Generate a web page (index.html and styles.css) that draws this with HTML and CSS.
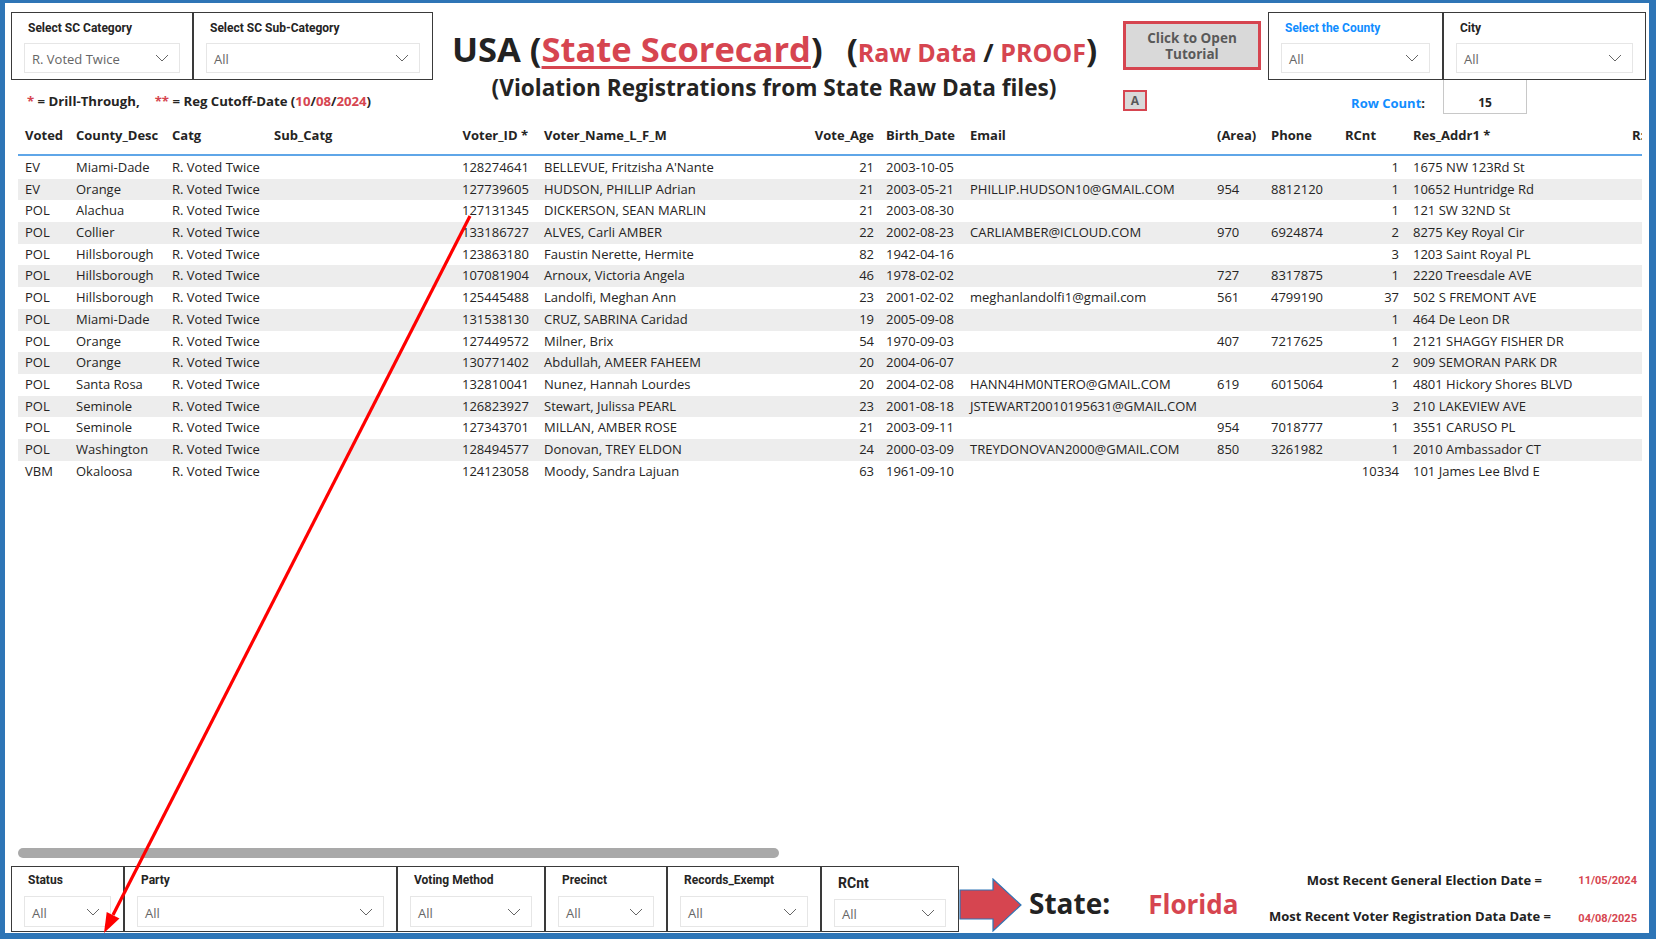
FILE: index.html
```html
<!DOCTYPE html>
<html>
<head>
<meta charset="utf-8">
<link rel="stylesheet" href="styles.css">
</head>
<body>
<div class="frame">
  <div class="top">
    <div class="left-col">
      <div class="slicer-pair">
        <div class="slicer w182">
          <div class="sl-head">Select SC Category</div>
          <div class="dd"><span>R. Voted Twice</span><svg class="chev" width="14" height="8" viewBox="0 0 14 8"><polyline points="1,1 7,7 13,1" fill="none" stroke="#666" stroke-width="1"/></svg></div>
        </div>
        <div class="slicer w240">
          <div class="sl-head">Select SC Sub-Category</div>
          <div class="dd"><span>All</span><svg class="chev" width="14" height="8" viewBox="0 0 14 8"><polyline points="1,1 7,7 13,1" fill="none" stroke="#666" stroke-width="1"/></svg></div>
        </div>
      </div>
      <div class="legend"><span class="red">*</span> = Drill-Through,<span class="gap"></span><span class="red">**</span> = Reg Cutoff-Date (<span class="red">10</span>/<span class="red">08</span>/<span class="red">2024</span>)</div>
    </div>
    <div class="center-col">
      <div class="title"><span class="t-big">USA (<u class="red">State Scorecard</u>)</span><span class="t-mid">(<span class="red t-small">Raw Data</span><span class="t-small"> / </span><span class="red t-small">PROOF</span>)</span></div>
      <div class="subtitle">(Violation Registrations from State Raw Data files)</div>
    </div>
    <div class="btn-col">
      <div class="tut-btn">Click to Open<br>Tutorial</div>
      <div class="a-btn">A</div>
    </div>
    <div class="right-col">
      <div class="slicer-pair">
        <div class="slicer w175">
          <div class="sl-head sl-blue">Select the County</div>
          <div class="dd"><span>All</span><svg class="chev" width="14" height="8" viewBox="0 0 14 8"><polyline points="1,1 7,7 13,1" fill="none" stroke="#666" stroke-width="1"/></svg></div>
        </div>
        <div class="slicer w203">
          <div class="sl-head">City</div>
          <div class="dd"><span>All</span><svg class="chev" width="14" height="8" viewBox="0 0 14 8"><polyline points="1,1 7,7 13,1" fill="none" stroke="#666" stroke-width="1"/></svg></div>
        </div>
      </div>
      <div class="rowcount">
        <div class="rc-label"><span class="blue">Row Count</span>:</div>
        <div class="rc-box">15</div>
      </div>
    </div>
  </div>

  <div class="table">
    <div class="row head">
      <div>Voted</div><div>County_Desc</div><div>Catg</div><div>Sub_Catg</div><div class="r id">Voter_ID *</div><div>Voter_Name_L_F_M</div><div class="r age">Vote_Age</div><div class="bd">Birth_Date</div><div>Email</div><div>(Area)</div><div>Phone</div><div>RCnt</div><div>Res_Addr1 *</div><div>R:</div>
    </div>
    <div class="body">
      <div class="row"><div>EV</div><div>Miami-Dade</div><div>R. Voted Twice</div><div></div><div class="r id">128274641</div><div>BELLEVUE, Fritzisha A'Nante</div><div class="r age">21</div><div class="bd">2003-10-05</div><div></div><div></div><div></div><div class="r rc">1</div><div>1675 NW 123Rd St</div><div></div></div>
      <div class="row alt"><div>EV</div><div>Orange</div><div>R. Voted Twice</div><div></div><div class="r id">127739605</div><div>HUDSON, PHILLIP Adrian</div><div class="r age">21</div><div class="bd">2003-05-21</div><div>PHILLIP.HUDSON10@GMAIL.COM</div><div>954</div><div>8812120</div><div class="r rc">1</div><div>10652 Huntridge Rd</div><div></div></div>
      <div class="row"><div>POL</div><div>Alachua</div><div>R. Voted Twice</div><div></div><div class="r id">127131345</div><div>DICKERSON, SEAN MARLIN</div><div class="r age">21</div><div class="bd">2003-08-30</div><div></div><div></div><div></div><div class="r rc">1</div><div>121 SW 32ND St</div><div></div></div>
      <div class="row alt"><div>POL</div><div>Collier</div><div>R. Voted Twice</div><div></div><div class="r id">133186727</div><div>ALVES, Carli AMBER</div><div class="r age">22</div><div class="bd">2002-08-23</div><div>CARLIAMBER@ICLOUD.COM</div><div>970</div><div>6924874</div><div class="r rc">2</div><div>8275 Key Royal Cir</div><div></div></div>
      <div class="row"><div>POL</div><div>Hillsborough</div><div>R. Voted Twice</div><div></div><div class="r id">123863180</div><div>Faustin Nerette, Hermite</div><div class="r age">82</div><div class="bd">1942-04-16</div><div></div><div></div><div></div><div class="r rc">3</div><div>1203 Saint Royal PL</div><div></div></div>
      <div class="row alt"><div>POL</div><div>Hillsborough</div><div>R. Voted Twice</div><div></div><div class="r id">107081904</div><div>Arnoux, Victoria Angela</div><div class="r age">46</div><div class="bd">1978-02-02</div><div></div><div>727</div><div>8317875</div><div class="r rc">1</div><div>2220 Treesdale AVE</div><div></div></div>
      <div class="row"><div>POL</div><div>Hillsborough</div><div>R. Voted Twice</div><div></div><div class="r id">125445488</div><div>Landolfi, Meghan Ann</div><div class="r age">23</div><div class="bd">2001-02-02</div><div>meghanlandolfi1@gmail.com</div><div>561</div><div>4799190</div><div class="r rc">37</div><div>502 S FREMONT AVE</div><div></div></div>
      <div class="row alt"><div>POL</div><div>Miami-Dade</div><div>R. Voted Twice</div><div></div><div class="r id">131538130</div><div>CRUZ, SABRINA Caridad</div><div class="r age">19</div><div class="bd">2005-09-08</div><div></div><div></div><div></div><div class="r rc">1</div><div>464 De Leon DR</div><div></div></div>
      <div class="row"><div>POL</div><div>Orange</div><div>R. Voted Twice</div><div></div><div class="r id">127449572</div><div>Milner, Brix</div><div class="r age">54</div><div class="bd">1970-09-03</div><div></div><div>407</div><div>7217625</div><div class="r rc">1</div><div>2121 SHAGGY FISHER DR</div><div></div></div>
      <div class="row alt"><div>POL</div><div>Orange</div><div>R. Voted Twice</div><div></div><div class="r id">130771402</div><div>Abdullah, AMEER FAHEEM</div><div class="r age">20</div><div class="bd">2004-06-07</div><div></div><div></div><div></div><div class="r rc">2</div><div>909 SEMORAN PARK DR</div><div></div></div>
      <div class="row"><div>POL</div><div>Santa Rosa</div><div>R. Voted Twice</div><div></div><div class="r id">132810041</div><div>Nunez, Hannah Lourdes</div><div class="r age">20</div><div class="bd">2004-02-08</div><div>HANN4HM0NTERO@GMAIL.COM</div><div>619</div><div>6015064</div><div class="r rc">1</div><div>4801 Hickory Shores BLVD</div><div></div></div>
      <div class="row alt"><div>POL</div><div>Seminole</div><div>R. Voted Twice</div><div></div><div class="r id">126823927</div><div>Stewart, Julissa PEARL</div><div class="r age">23</div><div class="bd">2001-08-18</div><div>JSTEWART20010195631@GMAIL.COM</div><div></div><div></div><div class="r rc">3</div><div>210 LAKEVIEW AVE</div><div></div></div>
      <div class="row"><div>POL</div><div>Seminole</div><div>R. Voted Twice</div><div></div><div class="r id">127343701</div><div>MILLAN, AMBER ROSE</div><div class="r age">21</div><div class="bd">2003-09-11</div><div></div><div>954</div><div>7018777</div><div class="r rc">1</div><div>3551 CARUSO PL</div><div></div></div>
      <div class="row alt"><div>POL</div><div>Washington</div><div>R. Voted Twice</div><div></div><div class="r id">128494577</div><div>Donovan, TREY ELDON</div><div class="r age">24</div><div class="bd">2000-03-09</div><div>TREYDONOVAN2000@GMAIL.COM</div><div>850</div><div>3261982</div><div class="r rc">1</div><div>2010 Ambassador CT</div><div></div></div>
      <div class="row"><div>VBM</div><div>Okaloosa</div><div>R. Voted Twice</div><div></div><div class="r id">124123058</div><div>Moody, Sandra Lajuan</div><div class="r age">63</div><div class="bd">1961-09-10</div><div></div><div></div><div></div><div class="r rc">10334</div><div>101 James Lee Blvd E</div><div></div></div>
    </div>
  </div>

  <div class="scroll-track"><div class="scroll-thumb"></div></div>

  <div class="footer">
    <div class="fslicer w113"><div class="fs-head">Status</div><div class="dd"><span>All</span><svg class="chev" width="14" height="8" viewBox="0 0 14 8"><polyline points="1,1 7,7 13,1" fill="none" stroke="#666" stroke-width="1"/></svg></div></div>
    <div class="fslicer w273"><div class="fs-head">Party</div><div class="dd"><span>All</span><svg class="chev" width="14" height="8" viewBox="0 0 14 8"><polyline points="1,1 7,7 13,1" fill="none" stroke="#666" stroke-width="1"/></svg></div></div>
    <div class="fslicer w148"><div class="fs-head">Voting Method</div><div class="dd"><span>All</span><svg class="chev" width="14" height="8" viewBox="0 0 14 8"><polyline points="1,1 7,7 13,1" fill="none" stroke="#666" stroke-width="1"/></svg></div></div>
    <div class="fslicer w122"><div class="fs-head">Precinct</div><div class="dd"><span>All</span><svg class="chev" width="14" height="8" viewBox="0 0 14 8"><polyline points="1,1 7,7 13,1" fill="none" stroke="#666" stroke-width="1"/></svg></div></div>
    <div class="fslicer w154"><div class="fs-head">Records_Exempt</div><div class="dd"><span>All</span><svg class="chev" width="14" height="8" viewBox="0 0 14 8"><polyline points="1,1 7,7 13,1" fill="none" stroke="#666" stroke-width="1"/></svg></div></div>
    <div class="fslicer w138 rcnt"><div class="fs-head">RCnt</div><div class="dd"><span>All</span><svg class="chev" width="14" height="8" viewBox="0 0 14 8"><polyline points="1,1 7,7 13,1" fill="none" stroke="#666" stroke-width="1"/></svg></div></div>
    <svg class="block-arrow" width="64" height="54" viewBox="0 0 64 54"><polygon points="1,12 34,12 34,1 62,27 34,53 34,41 1,41" fill="#D64550" stroke="#2E75B6" stroke-width="1.2"/></svg>
    <div class="state">State:</div>
    <div class="florida">Florida</div>
    <div class="dates">
      <div class="d-label l1">Most Recent General Election Date =</div><div class="d-val">11/05/2024</div>
      <div class="d-label l2">Most Recent Voter Registration Data Date =</div><div class="d-val v2">04/08/2025</div>
    </div>
  </div>

  <svg class="drill-arrow" width="1644" height="930" viewBox="0 0 1644 930">
    <line x1="465" y1="213" x2="108" y2="912" stroke="#FF0000" stroke-width="3.2"/>
    <polygon points="99,930 114.5,915.5 101.7,909" fill="#FF0000"/>
  </svg>
</div>
</body>
</html>
```

FILE: styles.css
```css
* { box-sizing: border-box; }
html, body { margin: 0; padding: 0; background: #ffffff; }
body { font-family: "Open Sans", "Noto Sans", sans-serif; color: #252423; }

.frame {
  position: relative;
  width: 1656px;
  height: 939px;
  border-style: solid;
  border-color: #2E75B6;
  border-width: 3px 7px 6px 5px;
  display: flex;
  flex-direction: column;
  overflow: hidden;
}

.red { color: #D64550; }
.blue { color: #118DFF; }

/* ---------- top ---------- */
.top { display: flex; height: 117px; flex: none; }

.left-col { margin-left: 6px; width: 422px; padding-top: 9px; }
.slicer-pair { display: flex; }
.slicer {
  height: 68px;
  border: 1px solid #3a3a3a;
  padding: 7px 12px 0 12px;
}
.w182 { width: 182px; }
.w240 { width: 240px; }
.w175 { width: 175px; }
.w203 { width: 203px; }
.sl-head {
  font-family: Roboto, "Liberation Sans", sans-serif;
  font-weight: 700;
  font-size: 12px;
  line-height: 16px;
  padding-left: 4px;
  color: #252423;
}
.sl-head.sl-blue { color: #118DFF; }
.dd {
  margin-top: 7px;
  height: 30px;
  border: 1px solid #e6e6e6;
  display: flex;
  align-items: center;
  justify-content: space-between;
  padding: 2px 10px 0 7px;
  font-size: 13px;
  color: #666666;
}
.chev { flex: none; margin-top: -2px; }

.legend {
  margin-top: 12px;
  padding-left: 16px;
  font-weight: 700;
  font-size: 13.2px;
  line-height: 18px;
  white-space: nowrap;
}
.legend .gap { display: inline-block; width: 15px; }

.center-col { margin-left: 19px; width: 644px; text-align: center; }
.title {
  margin-top: 22px;
  white-space: nowrap;
  font-weight: 700;
  color: #222;
  line-height: 48px;
  height: 48px;
}
.t-big { font-size: 34.5px; }
.t-big u { text-decoration-thickness: 3px; text-underline-offset: 4px; }
.t-mid { font-size: 33px; margin-left: 24px; }
.t-small { font-size: 25px; }
.subtitle {
  margin-top: 1px;
  font-weight: 700;
  font-size: 22.6px;
  line-height: 28px;
  color: #252423;
  white-space: nowrap;
}

.btn-col { margin-left: 27px; width: 138px; padding-top: 18px; }
.tut-btn {
  height: 49px;
  background: #d9d9d9;
  border: 3px solid #D64550;
  display: flex;
  align-items: center;
  justify-content: center;
  text-align: center;
  font-weight: 700;
  font-size: 13.5px;
  line-height: 16px;
  padding-top: 1px;
  color: #595959;
}
.a-btn {
  margin-top: 20px;
  width: 24px;
  height: 21px;
  background: #d9d9d9;
  border: 2px solid #D64550;
  font-weight: 700;
  font-size: 12px;
  line-height: 17px;
  text-align: center;
  color: #595959;
}

.right-col { margin-left: 7px; width: 378px; padding-top: 9px; }
.rowcount { display: flex; align-items: flex-start; }
.rc-label {
  width: 175px;
  text-align: right;
  padding-right: 18px;
  padding-top: 14px;
  font-weight: 700;
  font-size: 13px;
  line-height: 18px;
}
.rc-box {
  width: 84px;
  height: 34px;
  border: 1px solid #c8c8c8;
  border-top: none;
  text-align: center;
  font-weight: 700;
  font-size: 12px;
  padding-top: 15px;
  line-height: 16px;
}

/* ---------- table ---------- */
.table {
  margin-left: 13px;
  width: 1624px;
  height: 728px;
  flex: none;
  overflow: hidden;
}
.row {
  display: grid;
  grid-template-columns: 51px 96px 102px 188px 82px 266px 77px 83px 247px 54px 74px 68px 219px 30px;
  font-size: 13px;
  white-space: nowrap;
}
.row > div { padding: 0 7px; }
.row .r { text-align: right; }
.row .id { padding-right: 9px; }
.row .age { padding-right: 6px; }
.row .bd { padding-left: 6px; }
.row .rc { padding-right: 7px; }
.head {
  height: 36px;
  padding-top: 6px;
  line-height: 18px;
  font-weight: 700;
  border-bottom: 2px solid #5fa6e8;
}
.body { padding-top: 1px; }
.body .row { height: 21.7px; line-height: 21.7px; color: #252423; }
.body .row.alt { background: #ededed; }

.scroll-track { margin-left: 13px; height: 10px; flex: none; }
.scroll-thumb { width: 761px; height: 10px; border-radius: 5px; background: #a9a9a9; }

/* ---------- footer ---------- */
.footer {
  margin-top: 8px;
  margin-left: 6px;
  height: 66px;
  flex: none;
  display: flex;
  align-items: flex-start;
}
.fslicer {
  height: 66px;
  border: 1px solid #3a3a3a;
  padding: 5px 12px 0 12px;
}
.w113 { width: 113px; }
.w273 { width: 273px; }
.w148 { width: 148px; }
.w122 { width: 122px; }
.w154 { width: 154px; }
.w138 { width: 138px; }
.fs-head {
  font-family: Roboto, "Liberation Sans", sans-serif;
  font-weight: 700;
  font-size: 12px;
  line-height: 16px;
  padding-left: 4px;
}
.fslicer .dd { margin-top: 8px; height: 31px; }
.rcnt .fs-head { font-size: 14px; line-height: 20px; padding-top: 1px; }
.rcnt .dd { margin-top: 6px; height: 28px; }

.block-arrow { margin-top: 12px; flex: none; }
.state {
  margin-left: 6px;
  margin-top: 18px;
  font-weight: 700;
  font-size: 28px;
  line-height: 38px;
  color: #222;
}
.florida {
  margin-left: 38px;
  margin-top: 19px;
  font-weight: 700;
  font-size: 26px;
  line-height: 38px;
  color: #D64550;
}
.dates {
  margin-left: auto;
  margin-right: 12px;
  margin-top: 5px;
  display: grid;
  grid-template-columns: auto 60px;
  column-gap: 26px;
  row-gap: 17px;
  align-items: center;
}
.d-label {
  text-align: right;
  font-weight: 700;
  font-size: 13px;
  line-height: 19px;
  color: #222;
}
.d-label.l1 { padding-right: 9px; }
.d-val {
  font-family: Roboto, "Liberation Sans", sans-serif;
  font-weight: 700;
  font-size: 11px;
  color: #D64550;
  text-align: right;
}
.d-val.v2 { padding-top: 3px; }

.drill-arrow { position: absolute; left: 0; top: 0; pointer-events: none; }
```
